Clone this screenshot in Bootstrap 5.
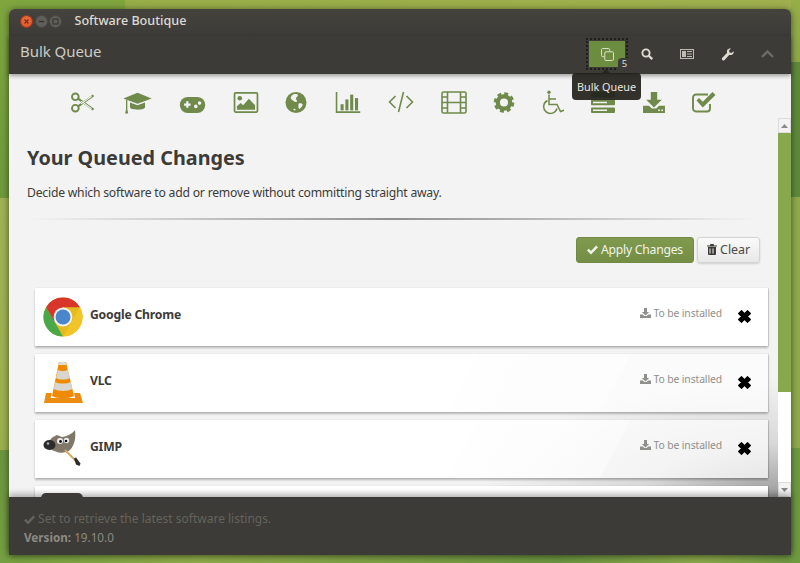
<!DOCTYPE html>
<html lang="en">
<head>
<meta charset="utf-8">
<title>Software Boutique</title>
<link rel="stylesheet" href="https://cdn.jsdelivr.net/npm/bootstrap@5.3.0/dist/css/bootstrap.min.css">
<style>
html,body{height:100%;}
body{margin:0;overflow:hidden;padding:9px 9px 8px 9px;font-family:"Noto Sans","Open Sans",sans-serif;color:#3c3b37;
background:
 linear-gradient(to bottom,#7fa53f 0,#6f9a3c 198px,#a0b255 198px,#9db050 450px,#6c9440 450px,#75a043 563px) 0 0/9px 100% no-repeat,
 linear-gradient(to bottom,#97ad47 0,#8fa948 62px,#5f8a3a 62px,#5f8a3a 197px,#8fa94c 197px,#8fa94c 448px,#6f9a3f 448px,#6f9a3f 563px) 100% 0/9px 100% no-repeat,
 linear-gradient(to right,#7fa53f 0,#7fa53f 125px,#97ad47 125px,#a0b050 800px) 0 0/100% 9px no-repeat,
 linear-gradient(to right,#76a040 0,#8fab4a 200px,#6c9440 560px,#8aa84a 700px,#6c9440 800px) 0 100%/100% 8px no-repeat,
 #8aa84a;}
.appwin{height:546px;border-radius:6px 6px 0 0;box-shadow:0 1px 7px rgba(0,0,0,.55);position:relative;}
.titlerow{height:27px;background:linear-gradient(#45433e,#3c3b37);border-radius:6px 6px 0 0;padding:0 0 3px 11px;color:#dfdbd2;font-size:12.6px;font-weight:500;}
.wbtn{width:13px;height:13px;border-radius:50%;background:#5f5e59;border:1px solid #4a4944;margin-right:1.5px;flex:none;}
.wbtn svg{display:block;}
.wbtn-close{background:radial-gradient(circle at 50% 40%,#f0764a,#d9471c);border-color:#a63a18;}
.wtitle{margin-left:11px;}
.headrow{height:38px;background:#3c3b37;padding:0 4px 0 11px;box-shadow:0 2px 4px rgba(0,0,0,.35);position:relative;z-index:2;}
.headtitle{color:#cfcbc1;font-size:15px;padding-bottom:7px;letter-spacing:-.05px;}
.headbtns{margin-left:auto;}
.hbtn{width:40px;height:26px;margin-top:-2px;}
.hbtn svg{display:block;}
.hbtn-on{background:#6c8c3f;width:36px;outline:2px dotted #1f1e1a;outline-offset:1px;margin:-2px 2px 0 2px;position:relative;}
.qbadge{position:absolute;right:-6px;bottom:-3px;width:13px;height:12px;background:#3c3b37;border-radius:4px 0 0 0;color:#dfdbd2;font-size:9.5px;line-height:12px;text-align:center;}
.dim{opacity:.3;}
.tipbox{position:absolute;left:563px;top:64px;width:69px;height:27px;background:rgba(34,33,28,.93);border-radius:4px;color:#e9e7e1;font-size:10.8px;line-height:27px;text-align:center;z-index:5;}
.tipbox::before{content:"";position:absolute;left:30px;top:-4px;border:4px solid transparent;border-top:0;border-bottom-color:#26251f;}
.bodywrap{height:423px;background:#f3f3f3;}
.catnav{height:44px;padding:12px 14px 0 0;gap:26.5px;}
.catnav svg{display:block;}
.catfill{fill:#6f8a4a;}
.nudge{margin-top:6px;}
.scrollarea{height:379px;}
.mainpane{flex:1;min-width:0;height:379px;overflow:hidden;padding:0 18px;
background:
 radial-gradient(ellipse 300px 120px at 100% 100%,rgba(120,120,120,.7) 0,rgba(190,190,190,.5) 45%,rgba(243,243,243,0) 100%),
 #f3f3f3;}
.qhead{font-size:19.8px;font-weight:700;margin:27px 0 0;line-height:26px;color:#3c3b37;}
.qdesc{font-size:12.2px;letter-spacing:-.22px;margin:12px 0 0;line-height:20px;color:#3c3b37;}
.fadeline{height:2px;margin:15px 4px 0 3px;background:linear-gradient(to right,rgba(120,120,120,0),#8f8f8f 50%,rgba(120,120,120,0));}
.actrow{margin-top:17px;gap:3px;}
.applybtn{background:linear-gradient(#80994f,#748f45);border:1px solid #6f8a42;color:#f1f3ea;font-size:12.2px;letter-spacing:-.25px;height:26px;width:118px;padding:0;border-radius:3px;}
.clearbtn{background:linear-gradient(#fafafa,#e8e8e8);border:1px solid #d4d4d4;color:#4a4a46;font-size:12.4px;height:26px;width:63px;padding:0;border-radius:3px;box-shadow:0 1px 2px rgba(0,0,0,.15);}
.applybtn svg,.clearbtn svg{vertical-align:-1px;}
.qlist{margin:25px -8px 0 8px;gap:8px;}
.qitem{height:58px;flex:none;background:#fff;box-shadow:0 2px 2px rgba(0,0,0,.25),1px 0 1px rgba(0,0,0,.1),0 0 1px rgba(0,0,0,.08);padding-left:8px;}
.qitem-soft{background:linear-gradient(118deg,#fff 58%,rgba(255,255,255,.9) 58%,rgba(255,255,255,.82) 78%,rgba(255,255,255,.7) 78%);}
.qitem-icon{width:40px;height:42px;margin-right:7px;}
.qitem-icon svg{display:block;}
.qname{font-size:12.2px;letter-spacing:-.2px;font-weight:700;color:#3c3b37;margin-top:-3px;}
.qstate{margin-left:auto;font-size:10.4px;letter-spacing:-.12px;color:#8f8f8b;margin-top:-7px;}
.qstate svg{vertical-align:-1px;fill:#8f8f8b;}
.qdrop{width:46px;padding-left:15px;margin-top:-2px;}
.qdrop svg{display:block;}
.sbar{width:13px;height:379px;background:#fff;}
.sbtn{height:15px;background:#f3f3f3;border:1px solid #ddd;color:#8a8a8a;}
.sthumb{height:259px;background:#88a84e;}
.sfill{flex:1;background:#fff;}
.footrow{height:58px;background:#3c3b37;padding:13px 0 0 15px;box-shadow:0 -3px 6px rgba(0,0,0,.3);position:relative;z-index:2;font-size:12px;line-height:18px;}
.foot1{color:#64635c;}
.foot2{color:#8c8a83;font-size:11.7px;}
.peek{position:absolute;left:32px;top:-4px;width:42px;height:5px;background:#3c3b37;border-radius:5px 5px 0 0;}
</style>
</head>
<body>
<div class="appwin d-flex flex-column">
  <div class="titlerow d-flex align-items-center">
    <span class="wbtn wbtn-close"><svg width="11" height="11" viewBox="0 0 11 11" stroke="#7a2a10" stroke-width="1.300" fill="none"><path d="M3.500 3.500l4 4M7.500 3.500l-4 4"/></svg></span>
    <span class="wbtn"><svg width="11" height="11" viewBox="0 0 11 11" stroke="#33322e" stroke-width="1.300" fill="none"><path d="M3 5.500h5"/></svg></span>
    <span class="wbtn"><svg width="11" height="11" viewBox="0 0 11 11" stroke="#33322e" stroke-width="1" fill="none"><rect x="3" y="3" width="5" height="5"/></svg></span>
    <span class="wtitle">Software Boutique</span>
  </div>
  <div class="headrow d-flex align-items-center">
    <span class="headtitle">Bulk Queue</span>
    <div class="headbtns d-flex align-items-center">
      <div class="hbtn hbtn-on d-flex align-items-center justify-content-center">
        <svg width="13" height="13" viewBox="0 0 12 12" fill="none" stroke="#dfe3d2" stroke-width=".9"><path d="M8 3V1.500a1 1 0 0 0-1-1H1.500a1 1 0 0 0-1 1V7a1 1 0 0 0 1 1H3"/><rect x="3.500" y="3.500" width="8" height="8" rx="1"/></svg>
        <span class="qbadge">5</span>
      </div>
      <div class="hbtn d-flex align-items-center justify-content-center">
        <svg width="12" height="12" viewBox="0 0 12 12" fill="none" stroke="#dfdbd2" stroke-width="1.900"><circle cx="5" cy="5" r="3.600"/><path d="M7.800 7.800L11.200 11.200" stroke-width="2.300"/></svg>
      </div>
      <div class="hbtn d-flex align-items-center justify-content-center">
        <svg width="14" height="10" viewBox="0 0 14 10" fill="none" stroke="#bdbab1"><rect x=".5" y=".5" width="13" height="9"/><rect x="2" y="2" width="4" height="6" fill="#bdbab1" stroke="none"/><path d="M7 2.500h5M7 5h5M7 7.500h5"/></svg>
      </div>
      <div class="hbtn d-flex align-items-center justify-content-center">
        <svg width="13" height="13" viewBox="0 0 13 13" fill="#dfdbd2"><path d="M12.600 3.200c.3 1.500-.2 2.900-1.600 3.500-1 .4-1.900.3-2.600 0L3.600 12a1.600 1.600 0 0 1-2.600-.6c-.3-.6-.1-1.100.3-1.600l4.900-5C5.800 3.800 5.800 2.800 6.400 1.800 7.100.7 8.700.1 10 .5L8 2.500l.5 2 2 .5z"/></svg>
      </div>
      <div class="hbtn d-flex align-items-center justify-content-center dim">
        <svg width="13" height="8" viewBox="0 0 13 8" fill="none" stroke="#dfdbd2" stroke-width="2.400"><path d="M1 7l5.500-5.500L12 7"/></svg>
      </div>
    </div>
  </div>
  <div class="tipbox">Bulk Queue</div>
  <div class="bodywrap d-flex flex-column">
    <div class="catnav d-flex align-items-center justify-content-center">
      <svg width="25" height="21" viewBox="0 0 25 22"><g fill="none" stroke="#6f8a4a"><circle cx="5" cy="5" r="3.500" stroke-width="2"/><circle cx="5" cy="17" r="3.500" stroke-width="2"/><path d="M7.800 7L24 18.500M7.800 15L24 3.500" stroke-width="2.300"/><path d="M11 9.500L22 17.500M11 12.500L22 4.500" stroke="#f3f3f3" stroke-width="1.100"/></g></svg>
      <svg class="catfill" width="31" height="23" viewBox="0 0 32 26"><path d="M16 2L32 8.500 16 14.500 0 8.500z"/><path d="M7.500 13v5.500c0 3.500 17 3.500 17 0V13L16 16.200z"/><path d="M3 10h1.500v10.500l1 5H2l1-5z"/></svg>
      <svg class="catfill nudge" width="27" height="16" viewBox="0 0 27 17"><rect width="27" height="17" rx="8.500"/><path d="M6.800 6.800V4.500h2.400v2.300h2.300v2.400H9.200v2.300H6.800V9.200H4.500V6.800z" fill="#f3f3f3"/><circle cx="17" cy="10" r="1.900" fill="#f3f3f3"/><circle cx="21" cy="6.500" r="1.900" fill="#f3f3f3"/></svg>
      <svg class="catfill" width="26" height="21" viewBox="0 0 26 22"><rect x="1" y="1" width="24" height="20" rx="1" fill="none" stroke="#6f8a4a" stroke-width="1.800"/><circle cx="6.500" cy="6.500" r="2.400"/><path d="M3.500 18.500V15l4-3.500 2.500 2.500L16 7l6.500 7v4.500z"/></svg>
      <svg class="catfill" width="22" height="21" viewBox="0 0 22 22"><circle cx="11" cy="11" r="11"/><path d="M8 2.500c2-.8 4.500-.6 5 .5.500 1.500-1.500 2-2 3.500-.3 1.500 1.500 2 1 3.500-.5 1-2.500.5-3.500-.5C7 8 5 7.500 5.500 5.500 6 4 7 3 8 2.500zM14 12c1.500-.5 3.500 0 4 1 .2 1.500-2 3.500-3 4.500-1 .5-1.500-1-1.500-2.500 0-1 0-2.500.5-3zM9 17.500c1 0 2 .7 1.500 1.500-.5.5-2 .2-2.200-.5 0-.5.2-1 .7-1z" fill="#f3f3f3"/></svg>
      <svg class="catfill" width="28" height="21" viewBox="0 0 28 24"><path d="M0 0h1.800v22H28v2H0z"/><rect x="5.500" y="14" width="3.500" height="7"/><rect x="11" y="8.500" width="3.500" height="12.500"/><rect x="16.500" y="3" width="3.500" height="18"/><rect x="22" y="7" width="3.500" height="14"/></svg>
      <svg width="26" height="22" viewBox="0 0 26 22" fill="none" stroke="#6f8a4a" stroke-width="1.600"><path d="M7.500 5L1.500 11l6 6M18.500 5l6 6-6 6M15.500 1L10.500 21"/></svg>
      <svg width="26" height="23" viewBox="0 0 26 23" fill="none" stroke="#6f8a4a" stroke-width="1.600"><rect x="1" y="1" width="24" height="21" rx="1.500"/><path d="M6.500 1v21M19.500 1v21M6.500 11.500h13M1 6h5.500M1 11.500h5.500M1 17h5.500M19.500 6H25M19.500 11.500H25M19.500 17H25"/></svg>
      <svg width="22" height="21" viewBox="0 0 22 22"><circle cx="11" cy="11" r="6.500" fill="none" stroke="#6f8a4a" stroke-width="4.500"/><circle cx="11" cy="11" r="9.300" fill="none" stroke="#6f8a4a" stroke-width="3" stroke-dasharray="4.100 3.200"/></svg>
      <svg width="23" height="25" viewBox="0 0 23 25" fill="none" stroke="#6f8a4a" stroke-width="1.500"><circle cx="7" cy="2.200" r="1.700" fill="#6f8a4a" stroke="none"/><path d="M7 4.500v10h8l3.500 7 3.500-1.300M7 9h7"/><path d="M5.500 10.500a6.800 6.800 0 1 0 9.500 8"/></svg>
      <svg class="catfill" width="24" height="21" viewBox="0 0 24 21"><rect y="0" width="24" height="5.500" rx="1"/><rect y="7.700" width="24" height="5.500" rx="1"/><rect y="15.400" width="24" height="5.500" rx="1"/><path d="M2 17.500h14v1.400H2zM2 9.800h14v1.400H2z" fill="#f3f3f3"/></svg>
      <svg class="catfill" width="24" height="21" viewBox="0 0 24 23"><path d="M8.500 0h7v8.500h5L12 17 3.500 8.500h5z"/><path d="M0 15h6.500l3 3h5l3-3H24v8H0z"/><circle cx="17.500" cy="20" r="1" fill="#f3f3f3"/><circle cx="21" cy="20" r="1" fill="#f3f3f3"/></svg>
      <svg class="catfill" width="24" height="21" viewBox="0 0 24 21"><path d="M18 12v4.500a3 3 0 0 1-3 3H4a3 3 0 0 1-3-3V5.500a3 3 0 0 1 3-3h12" fill="none" stroke="#6f8a4a" stroke-width="1.900"/><path d="M4.500 8.500l2.500-2.500 3.800 3.800L20.500 0 23.500 3 10.800 15.500z"/></svg>
    </div>
    <div class="scrollarea d-flex">
      <div class="mainpane">
        <h1 class="qhead">Your Queued Changes</h1>
        <p class="qdesc">Decide which software to add or remove without committing straight away.</p>
        <div class="fadeline"></div>
        <div class="actrow d-flex justify-content-end">
          <button class="btn applybtn" type="button"><svg width="11" height="10" viewBox="0 0 11 10" fill="#f1f3ea"><path d="M0 5.500l1.800-1.800L4 5.900 9.200.5 11 2.300 4 9.500z"/></svg> Apply Changes</button>
          <button class="btn clearbtn" type="button"><svg width="10" height="11" viewBox="0 0 10 11" fill="#3c3b37"><path d="M3.500 0h3l.7 1.500H10v1H0v-1h2.800zM1 3h8v7a1 1 0 0 1-1 1H2a1 1 0 0 1-1-1zm1.500 1.500V9.500h1V4.500zm3 0V9.500h1V4.500z"/></svg> Clear</button>
        </div>
        <div class="qlist d-flex flex-column">
          <div class="qitem d-flex align-items-center">
            <div class="qitem-icon">
              <svg width="40" height="42" viewBox="0 0 40 42"><g transform="translate(20 21)"><circle r="19.500" fill="#e4ba1f"/><path d="M-16.900-9.750A19.500 19.500 0 0 1 16.900-9.750L0-9.750-8.700 5z" fill="#d8352b"/><path d="M-16.900-9.750L0 19.500A19.500 19.500 0 0 1-16.900-9.750z" fill="#4aa84a"/><path d="M16.900-9.750A19.500 19.500 0 0 1 0 19.500L9 4z" fill="#f1c428"/><circle r="9.400" fill="#f2f2f2"/><circle r="7.500" fill="#4b86cc"/></g></svg>
            </div>
            <span class="qname">Google Chrome</span>
            <span class="qstate"><svg width="11" height="10" viewBox="0 0 11 10"><path d="M4 0h3v4h2.200L5.500 7.500 1.800 4H4z"/><path d="M0 6.500h2.800l1.500 1.500h2.400l1.500-1.500H11V10H0z"/></svg> To be installed</span>
            <span class="qdrop"><svg width="15" height="15" viewBox="0 0 14 14"><path d="M1.500 4.200L4.200 1.500 7 4.300 9.800 1.500l2.700 2.700L9.700 7l2.800 2.800-2.700 2.700L7 9.700l-2.800 2.800-2.700-2.700L4.300 7z" stroke="#000" stroke-width="1" stroke-linejoin="round"/></svg></span>
          </div>
          <div class="qitem qitem-soft d-flex align-items-center">
            <div class="qitem-icon">
              <svg width="40" height="42" viewBox="0 0 40 42"><path d="M3 31h6l-1.500 5L32 36l-1-5h6l3 10H1z" fill="#ea8d10"/><path d="M16 0h7L31 34c-5 3-17 3-22 0z" fill="#f08a00"/><path d="M14.800 8c3 1.500 7 1.500 10 0l2 8c-4 2-10 2-13.800 0zM12.200 20c4 2 11.500 2 15.400 0l1.700 7c-5 2.500-13.500 2.500-18.700 0z" fill="#d9d6cf"/><path d="M16.500 0h6l.8 3h-7.600z" fill="#ddd"/></svg>
            </div>
            <span class="qname">VLC</span>
            <span class="qstate"><svg width="11" height="10" viewBox="0 0 11 10"><path d="M4 0h3v4h2.200L5.500 7.500 1.800 4H4z"/><path d="M0 6.500h2.800l1.500 1.500h2.400l1.500-1.500H11V10H0z"/></svg> To be installed</span>
            <span class="qdrop"><svg width="15" height="15" viewBox="0 0 14 14"><path d="M1.500 4.200L4.200 1.500 7 4.300 9.800 1.500l2.700 2.700L9.700 7l2.800 2.800-2.700 2.700L7 9.700l-2.800 2.800-2.700-2.700L4.300 7z" stroke="#000" stroke-width="1" stroke-linejoin="round"/></svg></span>
          </div>
          <div class="qitem qitem-soft d-flex align-items-center">
            <div class="qitem-icon">
              <svg width="40" height="42" viewBox="0 0 40 42"><path d="M10 9l4-2 5 2c5-.5 10-3 13-7 1 6 0 15-5 20-4 3-10 3.500-14 1.500C8 22 4 19.500 6 14c1-2 2-4 4-5z" fill="#7f7868"/><ellipse cx="6.500" cy="17" rx="6" ry="5" fill="#2b2b2b"/><circle cx="5" cy="15.500" r="1.300" fill="#aaa"/><circle cx="17" cy="13" r="3" fill="#eee"/><circle cx="23.500" cy="12.500" r="2.700" fill="#eee"/><circle cx="17.500" cy="13.500" r="1.400" fill="#111"/><circle cx="23" cy="13" r="1.300" fill="#111"/><path d="M22 22l11 11" stroke="#d8a860" stroke-width="2"/><path d="M31 30.500l2-1 4.500 6-1 2.500-3.500-1.500z" fill="#2b2b2b"/></svg>
            </div>
            <span class="qname">GIMP</span>
            <span class="qstate"><svg width="11" height="10" viewBox="0 0 11 10"><path d="M4 0h3v4h2.200L5.500 7.500 1.800 4H4z"/><path d="M0 6.500h2.800l1.500 1.500h2.400l1.500-1.500H11V10H0z"/></svg> To be installed</span>
            <span class="qdrop"><svg width="15" height="15" viewBox="0 0 14 14"><path d="M1.500 4.200L4.200 1.500 7 4.300 9.800 1.500l2.700 2.700L9.700 7l2.800 2.800-2.700 2.700L7 9.700l-2.800 2.800-2.700-2.700L4.300 7z" stroke="#000" stroke-width="1" stroke-linejoin="round"/></svg></span>
          </div>
          <div class="qitem"></div>
        </div>
      </div>
      <div class="sbar d-flex flex-column">
        <div class="sbtn d-flex align-items-center justify-content-center"><svg width="7" height="4" viewBox="0 0 7 4" fill="#8a8a8a"><path d="M3.500 0L7 4H0z"/></svg></div>
        <div class="sthumb"></div>
        <div class="sfill"></div>
        <div class="sbtn d-flex align-items-center justify-content-center"><svg width="7" height="4" viewBox="0 0 7 4" fill="#8a8a8a"><path d="M3.500 4L7 0H0z"/></svg></div>
      </div>
    </div>
  </div>
  <div class="footrow">
    <span class="peek"></span>
    <div class="foot1"><svg width="11" height="10" viewBox="0 0 11 10" fill="#64635c"><path d="M0 5.500l1.800-1.800L4 5.900 9.200.5 11 2.300 4 9.500z"/></svg> Set to retrieve the latest software listings.</div>
    <div class="foot2"><b>Version:</b> 19.10.0</div>
  </div>
</div>
</body>
</html>
